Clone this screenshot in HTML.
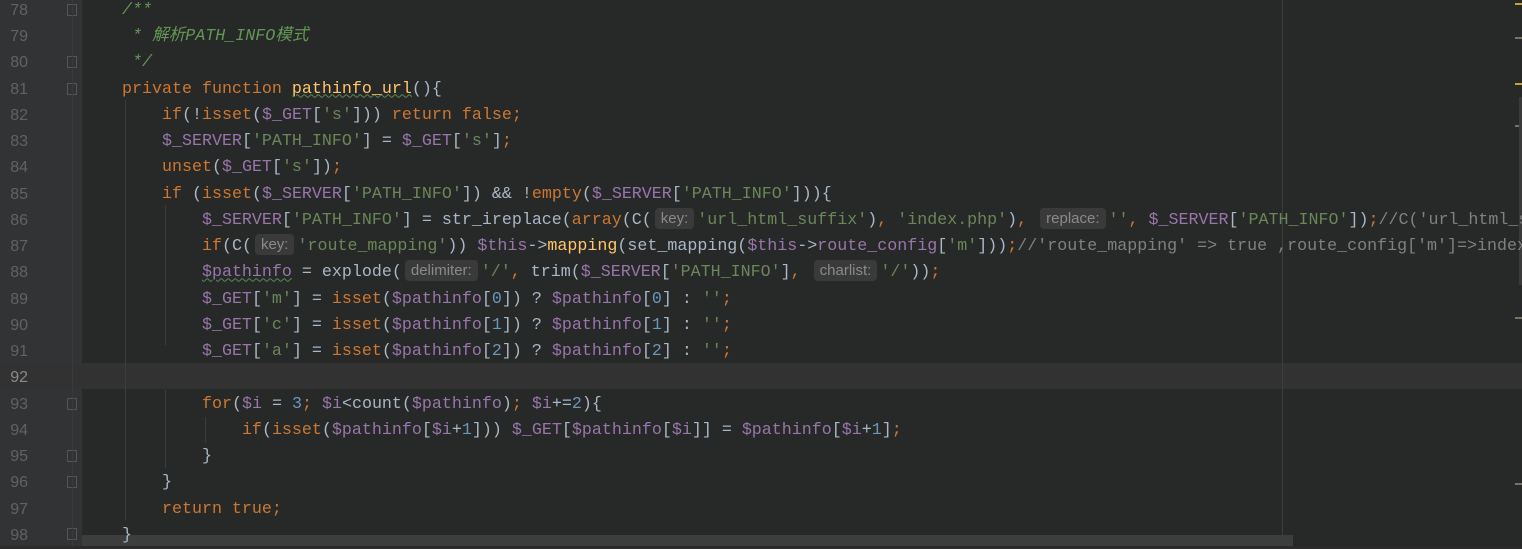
<!DOCTYPE html>
<html><head><meta charset="utf-8"><style>
body{margin:0;width:1522px;height:546px;background:#2b2b2b;overflow:hidden;position:relative;font-family:"Liberation Mono",monospace;}
#gut{position:absolute;left:0;top:0;width:82px;height:546px;background:#313335;}
#ed{position:absolute;left:82px;top:0;width:1440px;height:546px;background:#272828;}
.cur{position:absolute;left:0;top:363px;width:1522px;height:26px;background:#323232;}
.wrap{position:absolute;left:0;top:2.4px;width:1522px;height:546px;}
.ln{position:absolute;left:0;width:28px;text-align:right;color:#606366;font-size:16px;line-height:26.25px;font-family:"Liberation Sans",sans-serif;}
.l{position:absolute;left:82px;white-space:pre;font-size:16.67px;line-height:26.25px;color:#a9b7c6;}
.k{color:#cc7832}.v{color:#9876aa}.s{color:#6a8759}.c{color:#629755;font-style:italic}.f{color:#ffc66d}.g{color:#808080}
.h{display:inline-block;background:#3a3a3a;color:#8a8a8a;font-family:"Liberation Sans",sans-serif;font-size:15px;line-height:21px;padding:0 6px;border-radius:4px;margin:0 3px 0 3px;vertical-align:1px}
.fold{position:absolute;left:67px;width:10px;height:12px;border:1px solid #555;box-sizing:border-box;}
.guide{position:absolute;width:1px;background:#3c3c3c;}
.marg{position:absolute;left:1282px;top:0;width:1px;height:546px;background:#3e3e3e;}
.u{text-decoration:underline wavy #5a8a5a;text-decoration-thickness:1px}
</style></head><body>
<div id="gut"></div><div id="ed"></div><div class="cur"></div>
<div class="marg"></div>
<div class="guide" style="left:125px;top:100px;height:420px"></div>
<div class="guide" style="left:165px;top:205px;height:140px"></div>
<div class="guide" style="left:165px;top:390px;height:78px"></div>
<div class="guide" style="left:205px;top:417px;height:26px"></div>
<div style="position:absolute;left:82px;top:535px;width:1211px;height:11px;background:#3c3d3d"></div>
<div style="position:absolute;left:1515px;top:3px;width:7px;height:2px;background:#c9a13a"></div>
<div style="position:absolute;left:1515px;top:37px;width:7px;height:2px;background:#7a7260"></div>
<div style="position:absolute;left:1515px;top:83px;width:7px;height:2px;background:#c9a13a"></div>
<div style="position:absolute;left:1515px;top:125px;width:7px;height:2px;background:#7a7260"></div>
<div style="position:absolute;left:1519px;top:97px;width:3px;height:188px;background:#3a3a3a"></div>
<div style="position:absolute;left:1515px;top:317px;width:7px;height:2px;background:#7a7260"></div>
<div style="position:absolute;left:1515px;top:483px;width:7px;height:2px;background:#7a7260"></div>
<div class="fold" style="top:4px"></div><div class="fold" style="top:56px"></div><div class="fold" style="top:83px"></div>
<div class="fold" style="top:398px"></div><div class="fold" style="top:450px"></div><div class="fold" style="top:476px"></div><div class="fold" style="top:528px"></div>
<div style="position:absolute;left:72px;top:0;width:1px;height:546px;background:#3a3b3c"></div>
<div class="wrap">
<div class="ln" style="top:-4.6px">78</div>
<div class="ln" style="top:21.65px">79</div>
<div class="ln" style="top:47.9px">80</div>
<div class="ln" style="top:74.15px">81</div>
<div class="ln" style="top:100.4px">82</div>
<div class="ln" style="top:126.65px">83</div>
<div class="ln" style="top:152.9px">84</div>
<div class="ln" style="top:179.15px">85</div>
<div class="ln" style="top:205.4px">86</div>
<div class="ln" style="top:231.65px">87</div>
<div class="ln" style="top:257.9px">88</div>
<div class="ln" style="top:284.15px">89</div>
<div class="ln" style="top:310.4px">90</div>
<div class="ln" style="top:336.65px">91</div>
<div class="ln" style="top:362.9px;color:#8a8a8a">92</div>
<div class="ln" style="top:389.15px">93</div>
<div class="ln" style="top:415.4px">94</div>
<div class="ln" style="top:441.65px">95</div>
<div class="ln" style="top:467.9px">96</div>
<div class="ln" style="top:494.15px">97</div>
<div class="ln" style="top:520.4px">98</div>

<div class="l" style="top:-4.6px"><span class="c">    /**</span></div>
<div class="l" style="top:21.65px"><span class="c" style="font-family:'Liberation Mono','Noto Sans CJK SC',monospace">     * 解析PATH_INFO模式</span></div>
<div class="l" style="top:47.9px"><span class="c">     */</span></div>
<div class="l" style="top:74.15px">    <span class="k">private function </span><span class="f u">pathinfo_url</span>(){</div>
<div class="l" style="top:100.4px">        <span class="k">if</span>(!<span class="k">isset</span>(<span class="v">$_GET</span>[<span class="s">'s'</span>])) <span class="k">return false;</span></div>
<div class="l" style="top:126.65px">        <span class="v">$_SERVER</span>[<span class="s">'PATH_INFO'</span>] = <span class="v">$_GET</span>[<span class="s">'s'</span>]<span class="k">;</span></div>
<div class="l" style="top:152.9px">        <span class="k">unset</span>(<span class="v">$_GET</span>[<span class="s">'s'</span>])<span class="k">;</span></div>
<div class="l" style="top:179.15px">        <span class="k">if </span>(<span class="k">isset</span>(<span class="v">$_SERVER</span>[<span class="s">'PATH_INFO'</span>]) &amp;&amp; !<span class="k">empty</span>(<span class="v">$_SERVER</span>[<span class="s">'PATH_INFO'</span>])){</div>
<div class="l" style="top:205.4px">            <span class="v">$_SERVER</span>[<span class="s">'PATH_INFO'</span>] = str_ireplace(<span class="k">array</span>(C(<span class="h">key:</span><span class="s">'url_html_suffix'</span>)<span class="k">, </span><span class="s">'index.php'</span>)<span class="k">, </span><span class="h">replace:</span><span class="s">''</span><span class="k">, </span><span class="v">$_SERVER</span>[<span class="s">'PATH_INFO'</span>])<span class="k">;</span><span class="g">//C('url_html_suffix')</span></div>
<div class="l" style="top:231.65px">            <span class="k">if</span>(C(<span class="h">key:</span><span class="s">'route_mapping'</span>)) <span class="v">$this</span>-&gt;<span class="f">mapping</span>(set_mapping(<span class="v">$this</span>-&gt;<span class="v">route_config</span>[<span class="s">'m'</span>]))<span class="k">;</span><span class="g">//'route_mapping' =&gt; true ,route_config['m']=&gt;index</span></div>
<div class="l" style="top:257.9px">            <span class="v u">$pathinfo</span> = explode(<span class="h">delimiter:</span><span class="s">'/'</span><span class="k">, </span>trim(<span class="v">$_SERVER</span>[<span class="s">'PATH_INFO'</span>]<span class="k">, </span><span class="h">charlist:</span><span class="s">'/'</span>))<span class="k">;</span></div>
<div class="l" style="top:284.15px">            <span class="v">$_GET</span>[<span class="s">'m'</span>] = <span class="k">isset</span>(<span class="v">$pathinfo</span>[<span style="color:#6897bb">0</span>]) ? <span class="v">$pathinfo</span>[<span style="color:#6897bb">0</span>] : <span class="s">''</span><span class="k">;</span></div>
<div class="l" style="top:310.4px">            <span class="v">$_GET</span>[<span class="s">'c'</span>] = <span class="k">isset</span>(<span class="v">$pathinfo</span>[<span style="color:#6897bb">1</span>]) ? <span class="v">$pathinfo</span>[<span style="color:#6897bb">1</span>] : <span class="s">''</span><span class="k">;</span></div>
<div class="l" style="top:336.65px">            <span class="v">$_GET</span>[<span class="s">'a'</span>] = <span class="k">isset</span>(<span class="v">$pathinfo</span>[<span style="color:#6897bb">2</span>]) ? <span class="v">$pathinfo</span>[<span style="color:#6897bb">2</span>] : <span class="s">''</span><span class="k">;</span></div>
<div class="l" style="top:389.15px">            <span class="k">for</span>(<span class="v">$i</span> = <span style="color:#6897bb">3</span><span class="k">; </span><span class="v">$i</span>&lt;count(<span class="v">$pathinfo</span>)<span class="k">; </span><span class="v">$i</span>+=<span style="color:#6897bb">2</span>){</div>
<div class="l" style="top:415.4px">                <span class="k">if</span>(<span class="k">isset</span>(<span class="v">$pathinfo</span>[<span class="v">$i</span>+<span style="color:#6897bb">1</span>])) <span class="v">$_GET</span>[<span class="v">$pathinfo</span>[<span class="v">$i</span>]] = <span class="v">$pathinfo</span>[<span class="v">$i</span>+<span style="color:#6897bb">1</span>]<span class="k">;</span></div>
<div class="l" style="top:441.65px">            }</div>
<div class="l" style="top:467.9px">        }</div>
<div class="l" style="top:494.15px">        <span class="k">return true;</span></div>
<div class="l" style="top:520.4px">    }</div>
</div>
</body></html>
